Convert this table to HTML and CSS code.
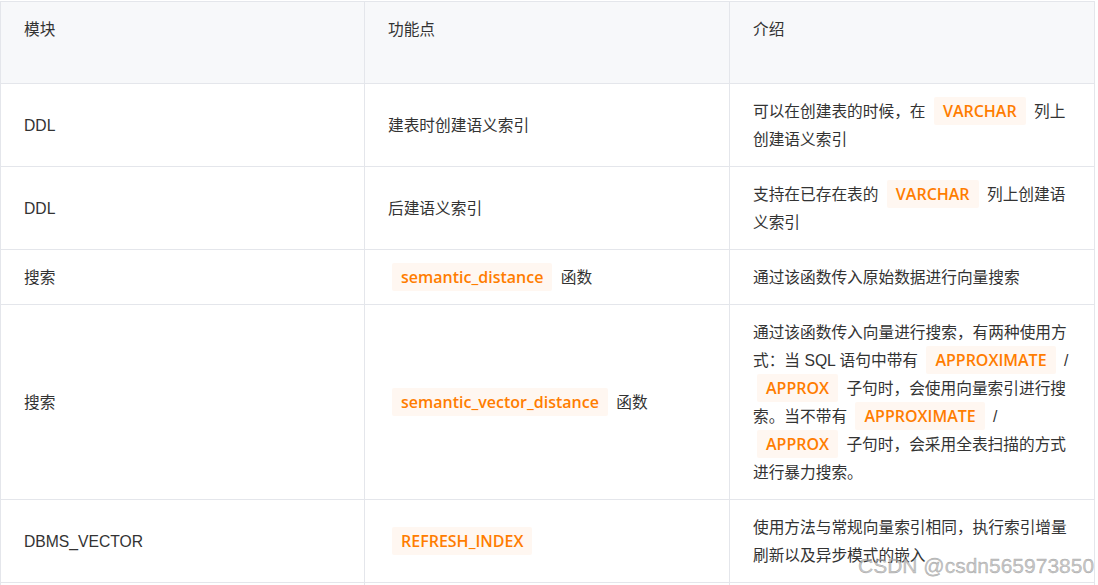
FILE: index.html
```html
<!DOCTYPE html>
<html lang="zh-CN">
<head>
<meta charset="utf-8">
<title>语义索引功能</title>
<link rel="stylesheet" href="styles.css">
</head>
<body>
<div class="page">
  <table class="feature-table">
    <colgroup>
      <col class="col-a">
      <col class="col-b">
      <col class="col-c">
    </colgroup>
    <thead>
      <tr>
        <th>模块</th>
        <th>功能点</th>
        <th>介绍</th>
      </tr>
    </thead>
    <tbody>
      <tr>
        <td>DDL</td>
        <td>建表时创建语义索引</td>
        <td>可以在创建表的时候，在 <code class="chip">VARCHAR</code> 列上创建语义索引</td>
      </tr>
      <tr>
        <td>DDL</td>
        <td>后建语义索引</td>
        <td>支持在已存在表的 <code class="chip">VARCHAR</code> 列上创建语义索引</td>
      </tr>
      <tr>
        <td>搜索</td>
        <td><code class="chip">semantic_distance</code> 函数</td>
        <td>通过该函数传入原始数据进行向量搜索</td>
      </tr>
      <tr>
        <td>搜索</td>
        <td><code class="chip">semantic_vector_distance</code> 函数</td>
        <td>通过该函数传入向量进行搜索，有两种使用方式：当 SQL 语句中带有 <code class="chip">APPROXIMATE</code> / <code class="chip">APPROX</code> 子句时，会使用向量索引进行搜索。当不带有 <code class="chip">APPROXIMATE</code> / <code class="chip">APPROX</code> 子句时，会采用全表扫描的方式进行暴力搜索。</td>
      </tr>
      <tr>
        <td>DBMS_VECTOR</td>
        <td><code class="chip">REFRESH_INDEX</code></td>
        <td>使用方法与常规向量索引相同，执行索引增量刷新以及异步模式的嵌入</td>
      </tr>
      <tr>
        <td>&nbsp;</td>
        <td>&nbsp;</td>
        <td>&nbsp;</td>
      </tr>
    </tbody>
  </table>
  <div class="watermark">CSDN @csdn565973850</div>
</div>
</body>
</html>
```

FILE: styles.css
```css
html, body {
  margin: 0;
  padding: 0;
  background: #ffffff;
  overflow: hidden;
}

.page {
  position: relative;
  width: 1098px;
  height: 585px;
  padding-top: 1px;
  box-sizing: border-box;
}

.feature-table {
  width: 1095px;
  table-layout: fixed;
  border-collapse: separate;
  border-spacing: 0;
  border-top: 1px solid #e4e6eb;
  border-left: 1px solid #e4e6eb;
  font-family: "Liberation Sans", "Noto Sans CJK SC", sans-serif;
  font-size: 15.7px;
  line-height: 28px;
  color: #333333;
}

.col-a { width: 364px; }
.col-b { width: 365px; }
.col-c { width: 365px; }

.feature-table th,
.feature-table td {
  border-right: 1px solid #e4e6eb;
  border-bottom: 1px solid #e4e6eb;
  padding: 14px 23px 12px;
  text-align: left;
}

.feature-table th {
  background: #f7f8fa;
  font-weight: normal;
  vertical-align: top;
  padding-bottom: 39px;
}

.feature-table td {
  vertical-align: middle;
}

.chip {
  font-family: "Open Sans", "Noto Sans", sans-serif;
  font-size: 16px;
  line-height: 16px;
  font-weight: 600;
  color: #ff7d00;
  background: #fff7f1;
  padding: 3px 9px;
  margin: 0 4px;
  border-radius: 2px;
  white-space: nowrap;
}

.watermark {
  position: absolute;
  left: 858px;
  top: 552px;
  font-family: "Liberation Sans", sans-serif;
  font-size: 21px;
  line-height: 28px;
  color: rgba(175, 175, 175, 0.7);
  white-space: nowrap;
  -webkit-text-stroke: 0.4px rgba(110, 110, 110, 0.5);
}
```
